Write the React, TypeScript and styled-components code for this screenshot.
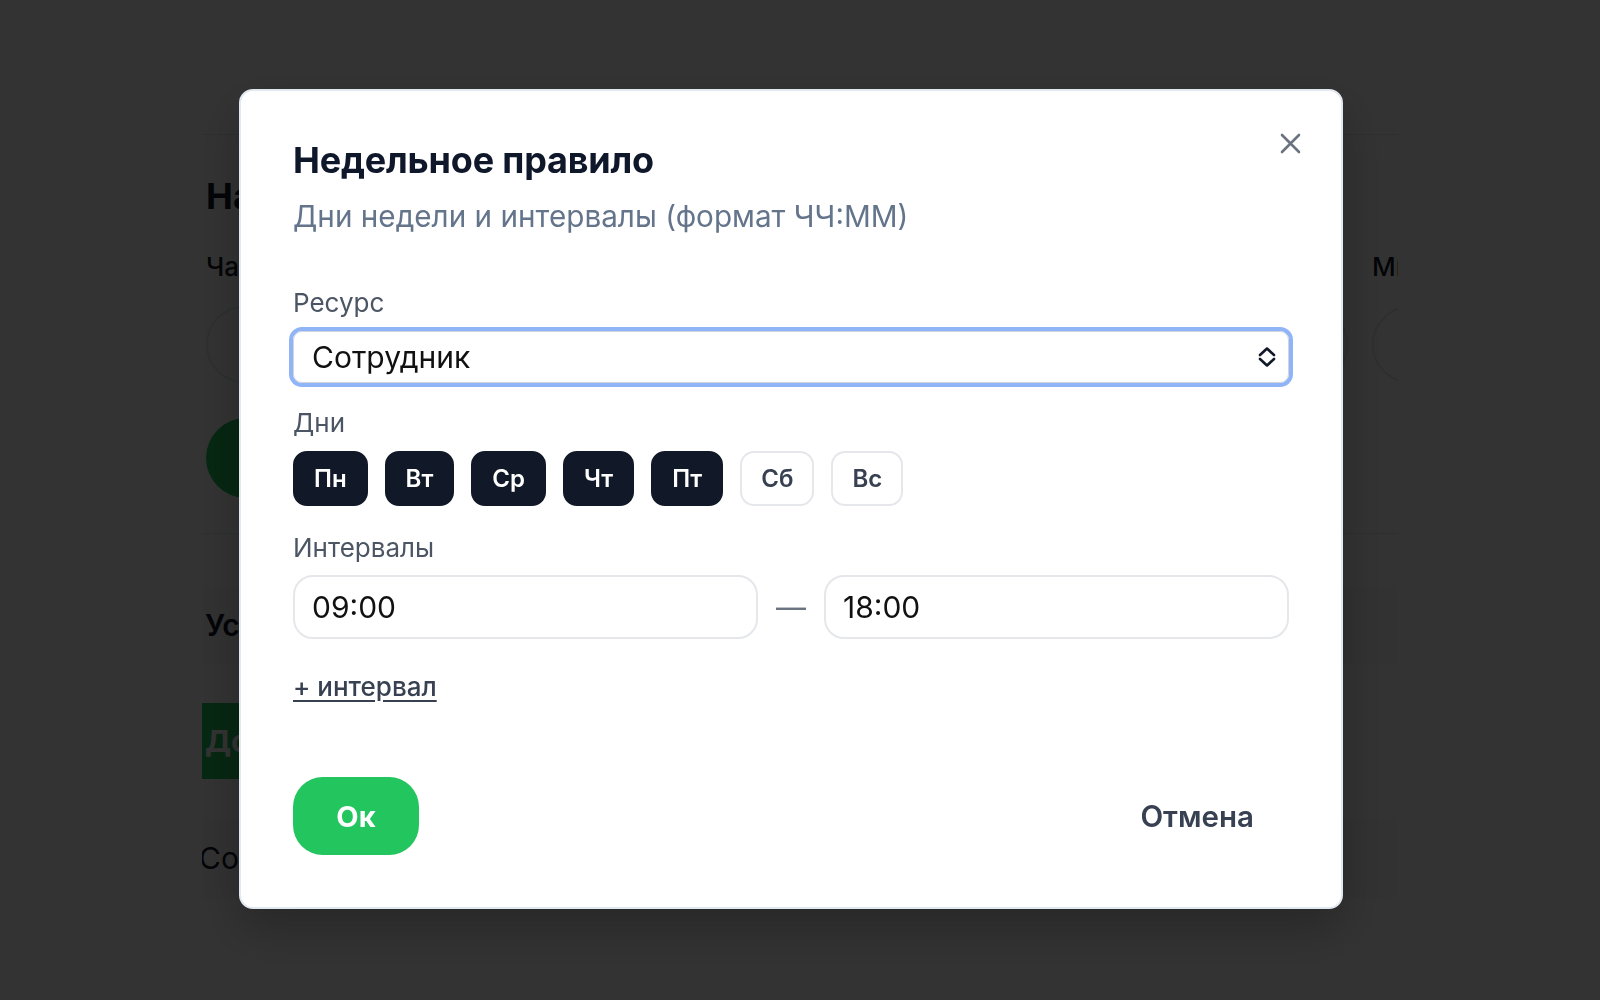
import React from 'react';
import styled, {createGlobalStyle} from 'styled-components';

const GlobalStyle = createGlobalStyle`
	html, body, #root {
		height:100%;
	}
	body {
		margin:0;
		background:#fff;
		font-family:"Inter", "Noto Sans", sans-serif;
		color:#111827;
	}
	* { box-sizing:border-box; }
`;

/* page under the dialog */

const Container = styled.div`
	width:1196px;
	margin:0 auto;
	padding-top:134px;
	overflow:hidden;
`;

const Card = styled.section`
	border-top:1px solid #e5e7eb;
	border-bottom:1px solid #e5e7eb;
	padding:39px 0 35px 4px;
`;

const CardTitle = styled.h1`
	margin:0;
	font-size:36px;
	line-height:44px;
	font-weight:700;
`;

const FieldRow = styled.div`
	display:flex;
	gap:24px;
	margin-top:33px;
	width:1600px;
`;

const PageField = styled.div<{$width:number}>`
	display:flex;
	flex-direction:column;
	gap:23px;
	width:${p => p.$width}px;
	flex:none;
`;

const PageLabel = styled.div`
	font-size:26px;
	line-height:32px;
	font-weight:500;
	color:#111827;
`;

const PageInput = styled.div`
	height:77px;
	border:2px solid #e5e7eb;
	border-radius:38px;
	padding:0 30px;
	display:flex;
	align-items:center;
	font-size:30px;
`;

const SaveButton = styled.button`
	margin-top:35px;
	height:80px;
	padding:0 40px;
	border:none;
	border-radius:40px;
	background:#22c55e;
	color:#fff;
	font:700 28px "Inter", sans-serif;
`;

const Section = styled.div`
	margin-top:52px;
	height:78px;
	display:flex;
	align-items:center;
	padding-left:3px;
	background:#f9fafb;
	font-size:30px;
	font-weight:600;
`;

const AddRuleButton = styled.button`
	margin-top:39px;
	height:76px;
	padding:0 24px 0 3px;
	border:none;
	background:#22c55e;
	color:#fff;
	font:700 30px "Inter", sans-serif;
`;

const Row = styled.div`
	margin-top:39px;
	height:80px;
	display:flex;
	align-items:center;
	margin-left:-3px;
	background:#fafafa;
	font-size:30px;
`;

/* dialog */

const Overlay = styled.div`
	position:fixed;
	inset:0;
	background:rgba(0,0,0,0.8);
	display:flex;
	align-items:center;
	justify-content:center;
	padding:0 18px 2px 0;
`;

const Modal = styled.div`
	position:relative;
	width:1104px;
	padding:52px;
	background:#fff;
	border:2px solid #e2e8f0;
	border-radius:14px;
	box-shadow:0 20px 50px rgba(0,0,0,0.25);
`;

const CloseButton = styled.button`
	position:absolute;
	top:42px;
	right:40px;
	padding:0;
	border:none;
	background:none;
	width:21px;
	height:21px;
	color:#6b7280;
	display:flex;
`;

const Title = styled.h2`
	margin:0;
	font-size:36px;
	line-height:34px;
	font-weight:700;
	letter-spacing:-0.2px;
	color:#0f172a;
`;

const Subtitle = styled.p`
	margin:20px 0 0;
	font-size:29.7px;
	line-height:38px;
	color:#64748b;
`;

const Form = styled.div`
	margin-top:52px;
	display:flex;
	flex-direction:column;
`;

const Field = styled.div<{$gap:number; $top:number}>`
	display:flex;
	flex-direction:column;
	gap:${p => p.$gap}px;
	margin-top:${p => p.$top}px;
`;

const Label = styled.label`
	font-size:26px;
	line-height:32px;
	color:#4b5563;
`;

const SelectBox = styled.div`
	height:52px;
	border:1.5px solid #d1d5db;
	border-radius:9px;
	box-shadow:0 0 0 4px #8fb5f8;
	padding:0 11px 0 18px;
	display:flex;
	align-items:center;
	justify-content:space-between;
	font-size:30px;
	color:#111;
`;

const Days = styled.div`
	display:flex;
	gap:17px;
`;

const DayButton = styled.button<{$active:boolean}>`
	height:55px;
	padding:0 19px;
	border-radius:14px;
	border:2px solid ${p => p.$active ? '#111827' : '#e5e7eb'};
	background:${p => p.$active ? '#111827' : '#fff'};
	color:${p => p.$active ? '#fff' : '#374151'};
	font:600 24px "Inter", sans-serif;
`;

const Intervals = styled.div`
	display:flex;
	align-items:center;
	gap:18px;
`;

const TimeInput = styled.div`
	flex:1;
	height:64px;
	border:2px solid #e5e7eb;
	border-radius:20px;
	padding:0 17px;
	display:flex;
	align-items:center;
	font-size:30px;
	color:#111;
`;

const Dash = styled.span`
	font-size:30px;
	color:#6b7280;
`;

const AddLink = styled.a`
	align-self:flex-start;
	margin-top:32px;
	font-size:26px;
	line-height:32px;
	font-weight:500;
	color:#374151;
	text-decoration:underline;
	text-underline-offset:4px;
`;

const Footer = styled.div`
	margin-top:74px;
	display:flex;
	justify-content:space-between;
	align-items:center;
`;

const OkButton = styled.button`
	width:126px;
	height:78px;
	border:none;
	border-radius:30px;
	background:#22c55e;
	color:#fff;
	font:700 29px "Inter", sans-serif;
`;

const CancelButton = styled.button`
	height:78px;
	padding:0 35px;
	border:none;
	background:none;
	color:#374151;
	font:600 29.5px "Inter", sans-serif;
`;

const days = ['Пн','Вт','Ср','Чт','Пт','Сб','Вс'];
const activeDays = ['Пн','Вт','Ср','Чт','Пт'];

function App() {
	return (
		<>
			<GlobalStyle/>
			<Container>
				<Card>
					<CardTitle>Настройки расписания</CardTitle>
					<FieldRow>
						<PageField $width={1142}>
							<PageLabel>Часовой пояс</PageLabel>
							<PageInput>Europe/Moscow</PageInput>
						</PageField>
						<PageField $width={400}>
							<PageLabel>Минимальный шаг</PageLabel>
							<PageInput>30</PageInput>
						</PageField>
					</FieldRow>
					<SaveButton>Сохранить</SaveButton>
				</Card>
				<Section>Услуги</Section>
				<AddRuleButton>Добавить правило</AddRuleButton>
				<Row>Сотрудник</Row>
			</Container>
			<Overlay>
				<Modal>
					<CloseButton aria-label="Закрыть">
						<svg width="21" height="21" viewBox="0 0 21 21" fill="none" stroke="currentColor" strokeWidth="2.6" strokeLinecap="round">
							<path d="M2 2 19 19M19 2 2 19"/>
						</svg>
					</CloseButton>
					<Title>Недельное правило</Title>
					<Subtitle>Дни недели и интервалы (формат ЧЧ:ММ)</Subtitle>
					<Form>
						<Field $gap={12} $top={0}>
							<Label>Ресурс</Label>
							<SelectBox>
								<span>Сотрудник</span>
								<svg width="20" height="24" viewBox="0 0 20 24" fill="none" stroke="#111827" strokeWidth="2.6" strokeLinecap="round" strokeLinejoin="round">
									<path d="M3 10 10 3.5l7 6.5M3 14l7 6.5 7-6.5"/>
								</svg>
							</SelectBox>
						</Field>
						<Field $gap={12} $top={24}>
							<Label>Дни</Label>
							<Days>
								{days.map(d =>
									<DayButton key={d} $active={activeDays.includes(d)}>{d}</DayButton>
								)}
							</Days>
						</Field>
						<Field $gap={11} $top={26}>
							<Label>Интервалы</Label>
							<Intervals>
								<TimeInput>09:00</TimeInput>
								<Dash>—</Dash>
								<TimeInput>18:00</TimeInput>
							</Intervals>
						</Field>
						<AddLink>+ интервал</AddLink>
					</Form>
					<Footer>
						<OkButton>Ок</OkButton>
						<CancelButton>Отмена</CancelButton>
					</Footer>
				</Modal>
			</Overlay>
		</>
	);
}

export default App;
